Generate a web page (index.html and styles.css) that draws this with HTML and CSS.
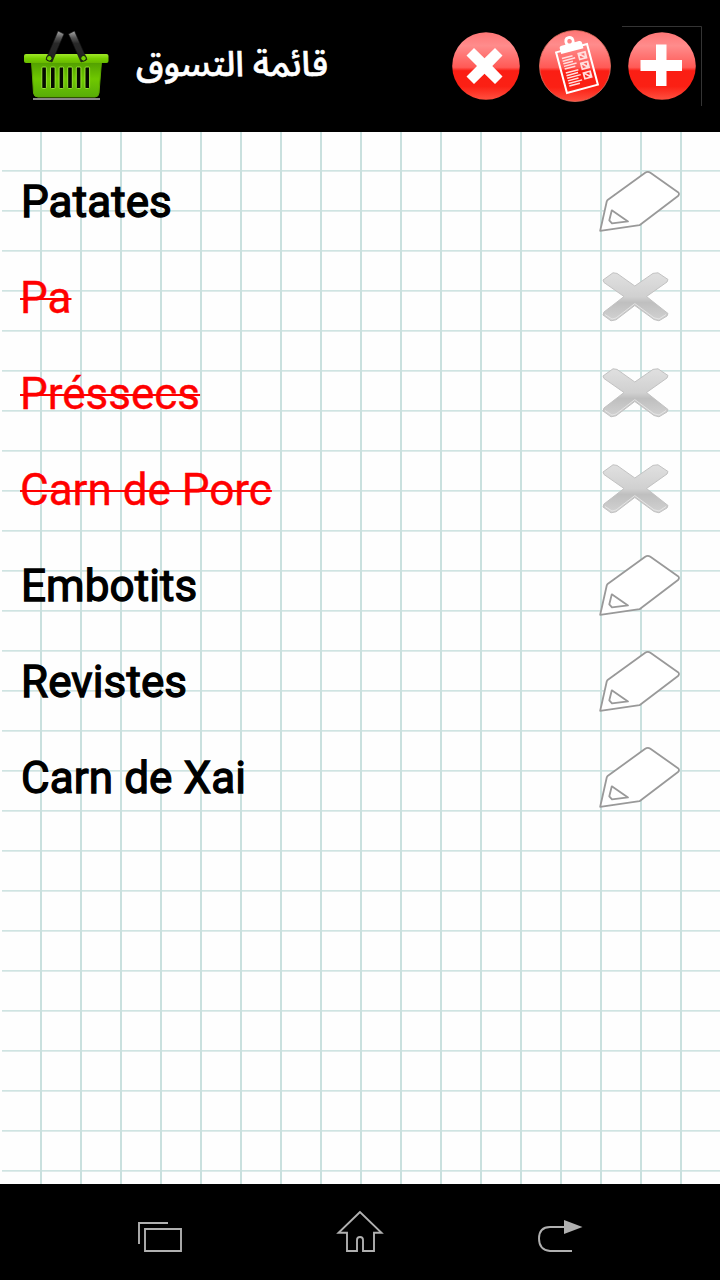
FILE: index.html
```html
<!DOCTYPE html>
<html lang="ar">
<head>
<meta charset="utf-8">
<title>قائمة التسوق</title>
<link rel="stylesheet" href="styles.css">
</head>
<body>
<svg class="defs" width="0" height="0" aria-hidden="true">
  <defs>
    <linearGradient id="gloss" x1="0" y1="0" x2="0" y2="1">
      <stop offset="0" stop-color="#ff7676"/><stop offset=".2" stop-color="#ff8c8c"/><stop offset=".52" stop-color="#ff5a56"/>
      <stop offset=".57" stop-color="#fb1e14"/><stop offset=".8" stop-color="#fb2014"/><stop offset="1" stop-color="#ff5040"/>
    </linearGradient>
    <linearGradient id="silver" x1="0" y1="0" x2="0" y2="1">
      <stop offset="0" stop-color="#e0e0e0"/><stop offset=".5" stop-color="#d0d0d0"/><stop offset=".62" stop-color="#bfbfbf"/><stop offset="1" stop-color="#d2d2d2"/>
    </linearGradient>
    <linearGradient id="green" x1="0" y1="0" x2="0" y2="1">
      <stop offset="0" stop-color="#4f9c00"/><stop offset=".5" stop-color="#6fc800"/><stop offset="1" stop-color="#58ad08"/>
    </linearGradient>
    <linearGradient id="rim" x1="0" y1="0" x2="0" y2="1">
      <stop offset="0" stop-color="#a0e828"/><stop offset=".5" stop-color="#78d000"/><stop offset="1" stop-color="#68b800"/>
    </linearGradient>
    <linearGradient id="handle" x1="0" y1="0" x2="0" y2="1">
      <stop offset="0" stop-color="#aaa"/><stop offset=".22" stop-color="#555"/><stop offset=".4" stop-color="#292929"/><stop offset="1" stop-color="#222"/>
    </linearGradient>
    <symbol id="pencil" viewBox="0 0 100 96">
      <g fill="none" stroke="#999" stroke-width="1.8" stroke-linejoin="round">
        <path fill="#fff" d="M17.8 47.2 18.6 46 56.2 18.8Q58.8 17 61.4 18.8L89 38.2Q91 40 89 42L50.5 71.2 11.2 76.8Z"/>
        <path d="M22.8 56.3 39 67.4 23 69.4 20.3 66.3Z"/>
      </g>
    </symbol>
    <symbol id="cross" viewBox="0 0 100 96">
      <path fill="url(#silver)" stroke="#c2c2c2" stroke-linejoin="round" d="M14 30 24 22.8 28 23.4 45.8 36 64 23.4 69 22.8 79 29.5 78 32 57.5 46.5 79 63.5 78 66 70 70.8 65 69.5 45.8 55.5 27 69.8 22 70.8 14 65 15 62 35 46.5 15 32.5Z"/>
      <path fill="none" stroke="#e4e4e4" stroke-width="1" d="M16 64.5 23 69 27 68 45.8 53.6 65 67.8 70 69 77 64.5"/>
    </symbol>
  </defs>
</svg>
<div class="screen">
  <header class="topbar">
    <svg class="basket" viewBox="0 0 90 76" aria-hidden="true">
      <path d="M14 71H81" stroke="#888" stroke-width="2"/>
      <path fill="url(#green)" stroke="#5ca800" d="M12.5 33H82.5L80 65Q79.5 69 76 69H19Q15 69 14.5 65Z"/>
      <rect x="5" y="26" width="84.5" height="9" rx="2" fill="url(#rim)"/>
      <g fill="#050a00" stroke="#a1ed38" stroke-width=".9">
        <rect x="22.8" y="39" width="4.6" height="21.5" rx="1"/><rect x="31.5" y="39" width="4.6" height="21.5" rx="1"/><rect x="40.1" y="39" width="4.6" height="21.5" rx="1"/><rect x="48.7" y="39" width="4.6" height="21.5" rx="1"/><rect x="57.3" y="39" width="4.6" height="21.5" rx="1"/><rect x="66" y="39" width="4.6" height="21.5" rx="1"/>
      </g>
      <g fill="url(#handle)" stroke="#111" stroke-width=".6">
        <path d="M39 3 45 6 33 34 27 31.5Z"/><path d="M55.5 3 49.5 6 62 34 68 31.5Z"/>
      </g>
      <g fill="#73d000" stroke="#111"><circle cx="30.3" cy="30.3" r="2.8"/><circle cx="64.5" cy="30.3" r="2.8"/></g>
    </svg>
    <h1 class="title" dir="rtl">قائمة التسوق</h1>
    <div class="actions">
      <svg class="action" viewBox="0 0 80 80" aria-hidden="true">
        <circle cx="40" cy="40" r="33.8" fill="url(#gloss)"/>
        <path fill="#fff" d="M28 22 38.5 32.3 49 22 56.5 29.5 46.3 40 56.5 50.5 49 58 38.5 47.7 28 58 20.5 50.5 31 40 20.5 29.5Z"/>
      </svg>
      <svg class="action" viewBox="0 0 80 80" aria-hidden="true">
        <circle cx="41" cy="40" r="35.5" fill="url(#gloss)" stroke="#e8705f" stroke-width=".8"/>
        <g transform="rotate(-15 43 42.5)">
          <rect x="27" y="21.5" width="32" height="42" fill="none" stroke="#fff" stroke-width="2"/>
          <path fill="#fff" fill-rule="evenodd" d="M31.5 24.5V19Q31.5 16.5 34 16.5H38Q36.8 9 42.8 9T47.6 16.5H52Q54.5 16.5 54.5 19V24.5ZM42.8 12A2.3 2.3 0 1 0 42.9 12Z"/>
          <g fill="none" stroke="#ffdede" stroke-width="1.5">
            <path d="M31 29H42M31 31.7H44M31 34.4H41M31 37.1H44M31 39.8H42M31 44H44M31 46.7H43M31 49.4H45M31 52.1H42M31 54.8H45M31 57.5H42"/>
            <path stroke-width="1.7" d="M48 28.5H55V34.5H48ZM48 38.5H55V44.5H48ZM48 48.5H55V54.5H48ZM49 29 54 34 55 29M49 39 54 44 55 39M49 49 54 54 55 49"/>
          </g>
        </g>
      </svg>
      <svg class="action" viewBox="0 0 80 80" aria-hidden="true">
        <path d="M0 .5H79.5V80" fill="none" stroke="#343434"/>
        <circle cx="40" cy="40" r="33.8" fill="url(#gloss)"/>
        <path fill="#fff" d="M34 18.5H44.5V34H60V45H44.5V60H34V45H18.5V34H34Z"/>
      </svg>
    </div>
  </header>
  <main class="paper">
    <ul class="list" lang="ca">
      <li class="item"><span class="label">Patates</span><svg class="mark"><use href="#pencil"/></svg></li>
      <li class="item done"><span class="label">Pa</span><svg class="mark"><use href="#cross"/></svg></li>
      <li class="item done"><span class="label">Préssecs</span><svg class="mark"><use href="#cross"/></svg></li>
      <li class="item done"><span class="label">Carn de Porc</span><svg class="mark"><use href="#cross"/></svg></li>
      <li class="item"><span class="label">Embotits</span><svg class="mark"><use href="#pencil"/></svg></li>
      <li class="item"><span class="label">Revistes</span><svg class="mark"><use href="#pencil"/></svg></li>
      <li class="item"><span class="label">Carn de Xai</span><svg class="mark"><use href="#pencil"/></svg></li>
    </ul>
  </main>
  <nav class="navbar">
    <svg class="nav-icon" viewBox="0 0 50 50" aria-hidden="true">
      <path d="M4 34V13H33M10 19H46V41H10Z"/>
    </svg>
    <svg class="nav-icon" viewBox="0 0 50 50" aria-hidden="true">
      <path d="M25 2 3.5 22.8H12V41H22V30Q22 27 25 27T28 30V41H39V22.8H46.5Z"/>
    </svg>
    <svg class="nav-icon" viewBox="0 0 50 50" aria-hidden="true">
      <path d="M30 17H15Q4 17 4 28.5T15 41H37"/><path class="solid" d="M29 10 47.5 17 29 24Z"/>
    </svg>
  </nav>
</div>
</body>
</html>
```
FILE: styles.css
```css
* { box-sizing: border-box; }
body { margin: 0; background: #000; font-family: Roboto, sans-serif; }
.defs { position: absolute; }
.screen { width: 720px; height: 1280px; display: flex; flex-direction: column; overflow: hidden; }

.topbar { height: 132px; flex: none; display: flex; align-items: center; padding: 0 18px 0 19px; background: #000; }
.basket { width: 90px; height: 76px; flex: none; }
.title { margin: 0 0 3px 27px; color: #fff; font: 500 35px/60px "Noto Sans Arabic", "DejaVu Sans", sans-serif; -webkit-text-stroke: .6px #fff; white-space: nowrap; }
.actions { margin-left: auto; display: flex; gap: 8px; }
.action { width: 80px; height: 80px; }

.paper {
  flex: 1;
  padding-top: 22px;
  background-color: #fefefe;
  background-image:
    linear-gradient(to right, #fefefe 2px, transparent 2px),
    linear-gradient(to right, #c9e0de 2px, transparent 2px),
    linear-gradient(to bottom, #cfe4e2 1px, #deebea 1px, #deebea 2px, transparent 2px);
  background-size: 100% 100%, 40px 40px, 40px 40px;
  background-position: 0 0, 40px 0, 0 38px;
}
.list { list-style: none; margin: 0; padding: 0 31px 0 20px; }
.item { height: 96px; display: flex; align-items: center; justify-content: space-between; }
.label { padding-left: 1px; font-size: 44px; line-height: 52px; letter-spacing: .1px; color: #000; -webkit-text-stroke: 1.3px #000; white-space: nowrap; }
.done .label { padding-left: 0; letter-spacing: 0; color: #f00; -webkit-text-stroke: .4px #f00; text-decoration: line-through; text-decoration-thickness: 2px; }
.mark { width: 100px; height: 96px; flex: none; }

.navbar { height: 96px; flex: none; display: flex; justify-content: space-between; padding: 26px 135px 0; background: #000; }
.nav-icon { width: 50px; height: 50px; fill: none; stroke: #b0b0b0; stroke-width: 1.9; }
.nav-icon .solid { fill: #b0b0b0; stroke: none; }
```
